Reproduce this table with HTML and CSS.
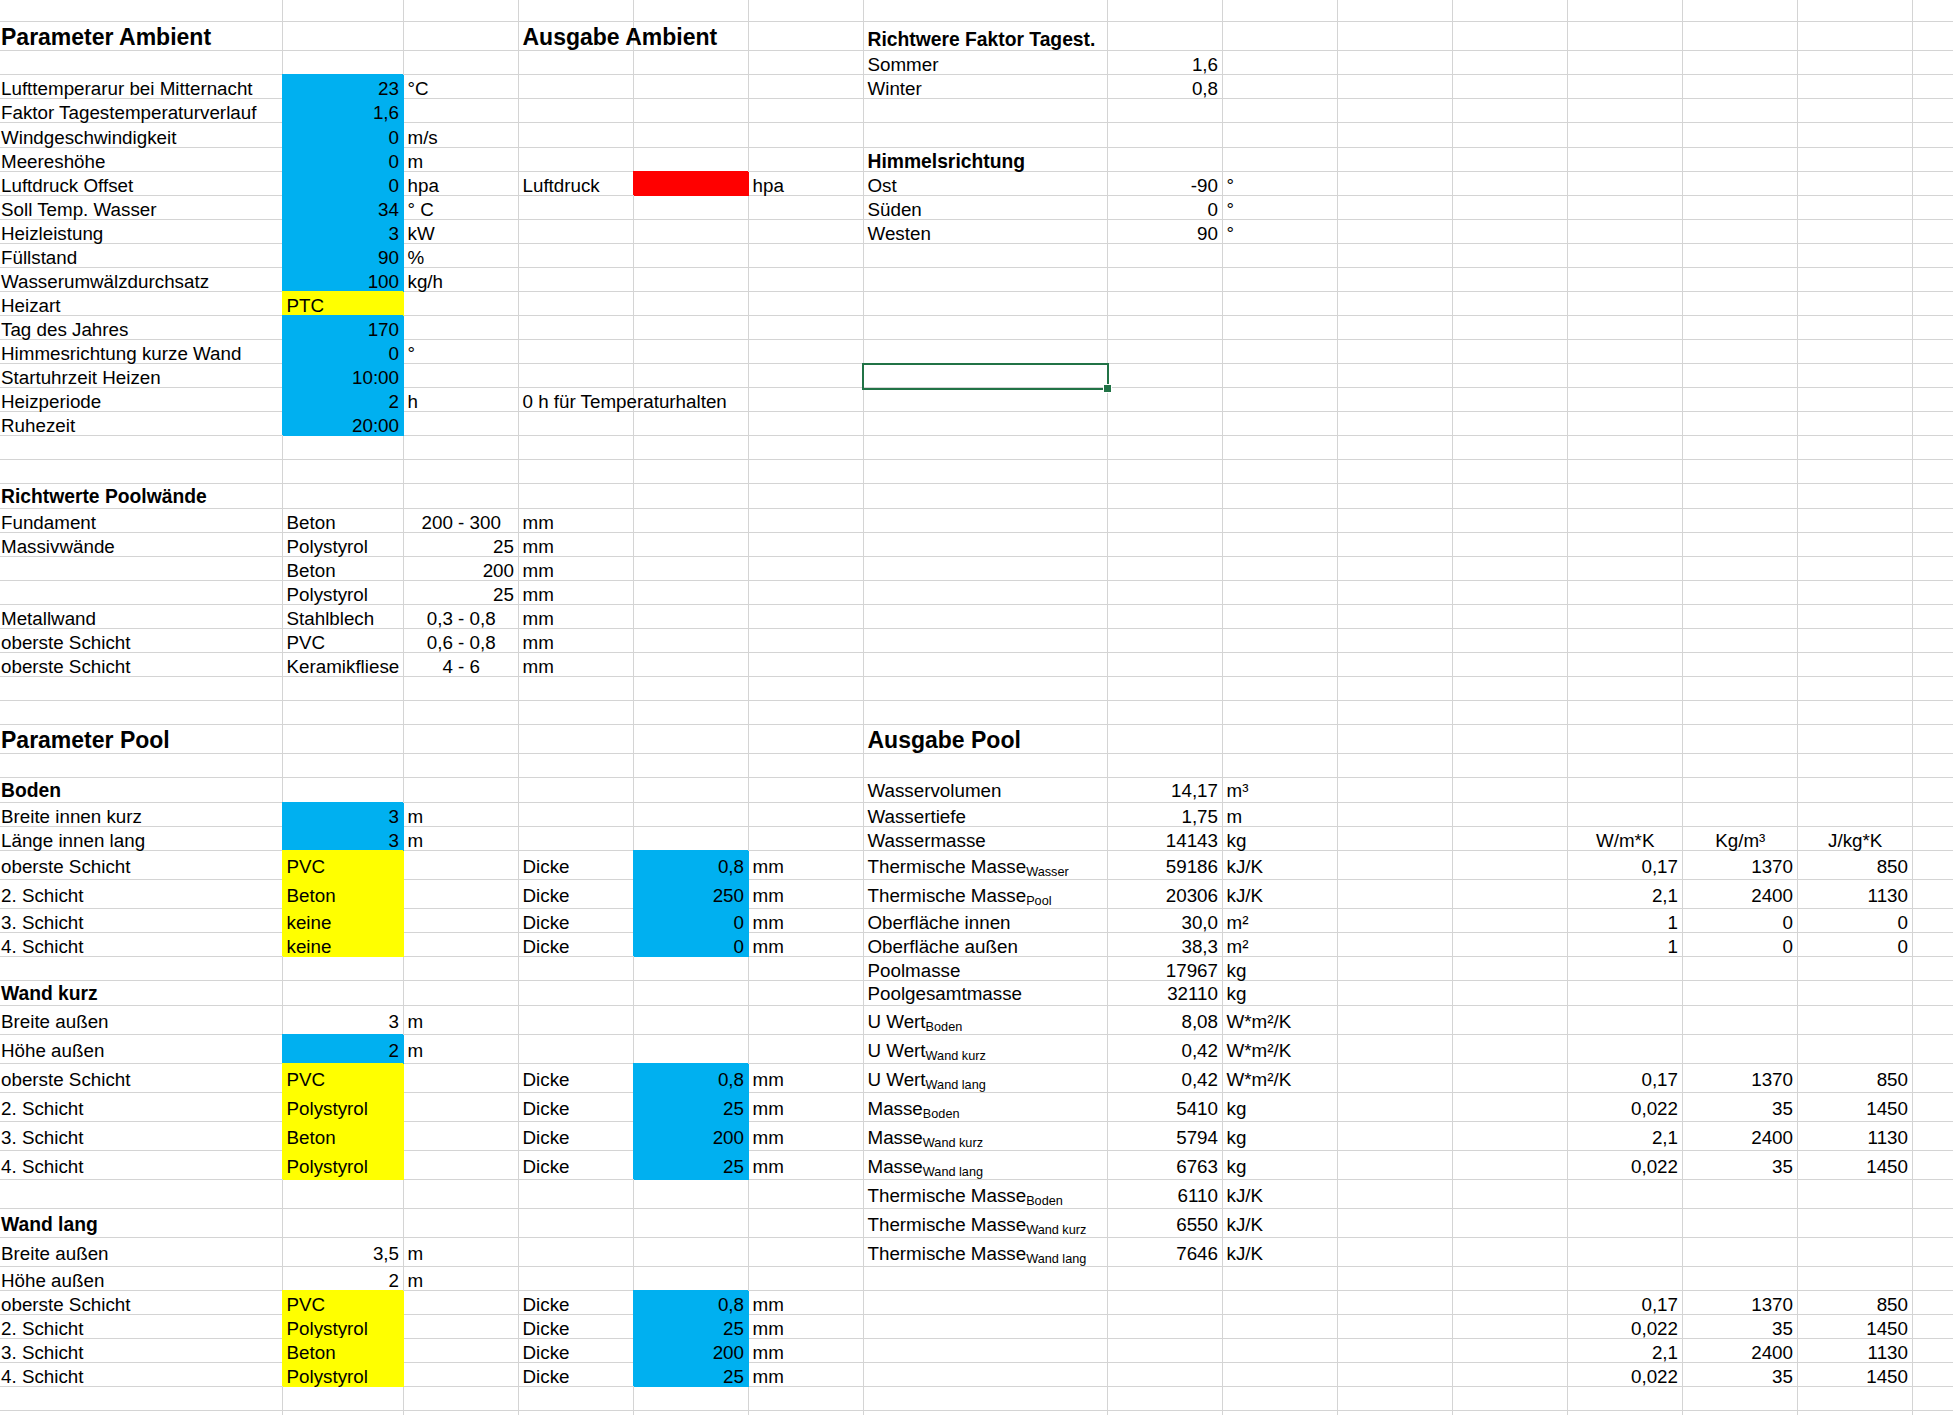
FILE: index.html
```html
<!DOCTYPE html>
<html lang="de">
<head>
<meta charset="utf-8">
<title>Pool Berechnung</title>
<link rel="stylesheet" href="styles.css">
</head>
<body>
<div class="sheet">
  <div class="row h22"></div>
  <div class="row h29 rh">
    <div class="c ca hdr">Parameter Ambient</div>
    <div class="c cd hdr">Ausgabe Ambient</div>
    <div class="c cg bold">Richtwere Faktor Tagest.</div>
  </div>
  <div class="row">
    <div class="c cg">Sommer</div><div class="c ch r">1,6</div>
  </div>
  <div class="row">
    <div class="c ca">Lufttemperarur bei Mitternacht</div><div class="c cb r blue">23</div><div class="c cc">°C</div>
    <div class="c cg">Winter</div><div class="c ch r">0,8</div>
  </div>
  <div class="row">
    <div class="c ca">Faktor Tagestemperaturverlauf</div><div class="c cb r blue">1,6</div>
  </div>
  <div class="row h25">
    <div class="c ca">Windgeschwindigkeit</div><div class="c cb r blue">0</div><div class="c cc">m/s</div>
  </div>
  <div class="row">
    <div class="c ca">Meereshöhe</div><div class="c cb r blue">0</div><div class="c cc">m</div>
    <div class="c cg bold">Himmelsrichtung</div>
  </div>
  <div class="row">
    <div class="c ca">Luftdruck Offset</div><div class="c cb r blue">0</div><div class="c cc">hpa</div>
    <div class="c cd">Luftdruck</div><div class="c ce red"></div><div class="c cf">hpa</div>
    <div class="c cg">Ost</div><div class="c ch r">-90</div><div class="c ci">°</div>
  </div>
  <div class="row">
    <div class="c ca">Soll Temp. Wasser</div><div class="c cb r blue">34</div><div class="c cc">° C</div>
    <div class="c cg">Süden</div><div class="c ch r">0</div><div class="c ci">°</div>
  </div>
  <div class="row">
    <div class="c ca">Heizleistung</div><div class="c cb r blue">3</div><div class="c cc">kW</div>
    <div class="c cg">Westen</div><div class="c ch r">90</div><div class="c ci">°</div>
  </div>
  <div class="row">
    <div class="c ca">Füllstand</div><div class="c cb r blue">90</div><div class="c cc">%</div>
  </div>
  <div class="row">
    <div class="c ca">Wasserumwälzdurchsatz</div><div class="c cb r blue">100</div><div class="c cc">kg/h</div>
  </div>
  <div class="row">
    <div class="c ca">Heizart</div><div class="c cb yel">PTC</div>
  </div>
  <div class="row">
    <div class="c ca">Tag des Jahres</div><div class="c cb r blue">170</div>
  </div>
  <div class="row">
    <div class="c ca">Himmesrichtung kurze Wand</div><div class="c cb r blue">0</div><div class="c cc">°</div>
  </div>
  <div class="row">
    <div class="c ca">Startuhrzeit Heizen</div><div class="c cb r blue">10:00</div>
    <div class="c cg sel"></div>
  </div>
  <div class="row">
    <div class="c ca">Heizperiode</div><div class="c cb r blue">2</div><div class="c cc">h</div>
    <div class="c cd">0 h für Temperaturhalten</div>
  </div>
  <div class="row">
    <div class="c ca">Ruhezeit</div><div class="c cb r blue">20:00</div>
  </div>
  <div class="row"></div>
  <div class="row"></div>
  <div class="row h25 rb">
    <div class="c ca bold">Richtwerte Poolwände</div>
  </div>
  <div class="row">
    <div class="c ca">Fundament</div><div class="c cb">Beton</div><div class="c cc ctr">200 - 300</div><div class="c cd">mm</div>
  </div>
  <div class="row">
    <div class="c ca">Massivwände</div><div class="c cb">Polystyrol</div><div class="c cc r">25</div><div class="c cd">mm</div>
  </div>
  <div class="row">
    <div class="c cb">Beton</div><div class="c cc r">200</div><div class="c cd">mm</div>
  </div>
  <div class="row">
    <div class="c cb">Polystyrol</div><div class="c cc r">25</div><div class="c cd">mm</div>
  </div>
  <div class="row">
    <div class="c ca">Metallwand</div><div class="c cb">Stahlblech</div><div class="c cc ctr">0,3 - 0,8</div><div class="c cd">mm</div>
  </div>
  <div class="row">
    <div class="c ca">oberste Schicht</div><div class="c cb">PVC</div><div class="c cc ctr">0,6 - 0,8</div><div class="c cd">mm</div>
  </div>
  <div class="row">
    <div class="c ca">oberste Schicht</div><div class="c cb">Keramikfliese</div><div class="c cc ctr">4 - 6</div><div class="c cd">mm</div>
  </div>
  <div class="row"></div>
  <div class="row"></div>
  <div class="row h29 rh">
    <div class="c ca hdr">Parameter Pool</div>
    <div class="c cg hdr">Ausgabe Pool</div>
  </div>
  <div class="row"></div>
  <div class="row h25 rb">
    <div class="c ca bold">Boden</div>
    <div class="c cg">Wasservolumen</div><div class="c ch r">14,17</div><div class="c ci">m³</div>
  </div>
  <div class="row">
    <div class="c ca">Breite innen kurz</div><div class="c cb r blue">3</div><div class="c cc">m</div>
    <div class="c cg">Wassertiefe</div><div class="c ch r">1,75</div><div class="c ci">m</div>
  </div>
  <div class="row">
    <div class="c ca">Länge innen lang</div><div class="c cb r blue">3</div><div class="c cc">m</div>
    <div class="c cg">Wassermasse</div><div class="c ch r">14143</div><div class="c ci">kg</div>
    <div class="c cl ctr">W/m*K</div><div class="c cm ctr">Kg/m³</div><div class="c cn ctr">J/kg*K</div>
  </div>
  <div class="row h29 sub">
    <div class="c ca">oberste Schicht</div><div class="c cb yel">PVC</div>
    <div class="c cd">Dicke</div><div class="c ce r blue">0,8</div><div class="c cf">mm</div>
    <div class="c cg"><span>Thermische Masse<sub>Wasser</sub></span></div><div class="c ch r">59186</div><div class="c ci">kJ/K</div>
    <div class="c cl r">0,17</div><div class="c cm r">1370</div><div class="c cn r">850</div>
  </div>
  <div class="row h29 sub">
    <div class="c ca">2. Schicht</div><div class="c cb yel">Beton</div>
    <div class="c cd">Dicke</div><div class="c ce r blue">250</div><div class="c cf">mm</div>
    <div class="c cg"><span>Thermische Masse<sub>Pool</sub></span></div><div class="c ch r">20306</div><div class="c ci">kJ/K</div>
    <div class="c cl r">2,1</div><div class="c cm r">2400</div><div class="c cn r">1130</div>
  </div>
  <div class="row">
    <div class="c ca">3. Schicht</div><div class="c cb yel">keine</div>
    <div class="c cd">Dicke</div><div class="c ce r blue">0</div><div class="c cf">mm</div>
    <div class="c cg">Oberfläche innen</div><div class="c ch r">30,0</div><div class="c ci">m²</div>
    <div class="c cl r">1</div><div class="c cm r">0</div><div class="c cn r">0</div>
  </div>
  <div class="row">
    <div class="c ca">4. Schicht</div><div class="c cb yel">keine</div>
    <div class="c cd">Dicke</div><div class="c ce r blue">0</div><div class="c cf">mm</div>
    <div class="c cg">Oberfläche außen</div><div class="c ch r">38,3</div><div class="c ci">m²</div>
    <div class="c cl r">1</div><div class="c cm r">0</div><div class="c cn r">0</div>
  </div>
  <div class="row">
    <div class="c cg">Poolmasse</div><div class="c ch r">17967</div><div class="c ci">kg</div>
  </div>
  <div class="row h25 rb">
    <div class="c ca bold">Wand kurz</div>
    <div class="c cg">Poolgesamtmasse</div><div class="c ch r">32110</div><div class="c ci">kg</div>
  </div>
  <div class="row h29 sub">
    <div class="c ca">Breite außen</div><div class="c cb r">3</div><div class="c cc">m</div>
    <div class="c cg"><span>U Wert<sub>Boden</sub></span></div><div class="c ch r">8,08</div><div class="c ci">W*m²/K</div>
  </div>
  <div class="row h29 sub">
    <div class="c ca">Höhe außen</div><div class="c cb r blue">2</div><div class="c cc">m</div>
    <div class="c cg"><span>U Wert<sub>Wand kurz</sub></span></div><div class="c ch r">0,42</div><div class="c ci">W*m²/K</div>
  </div>
  <div class="row h29 sub">
    <div class="c ca">oberste Schicht</div><div class="c cb yel">PVC</div>
    <div class="c cd">Dicke</div><div class="c ce r blue">0,8</div><div class="c cf">mm</div>
    <div class="c cg"><span>U Wert<sub>Wand lang</sub></span></div><div class="c ch r">0,42</div><div class="c ci">W*m²/K</div>
    <div class="c cl r">0,17</div><div class="c cm r">1370</div><div class="c cn r">850</div>
  </div>
  <div class="row h29 sub">
    <div class="c ca">2. Schicht</div><div class="c cb yel">Polystyrol</div>
    <div class="c cd">Dicke</div><div class="c ce r blue">25</div><div class="c cf">mm</div>
    <div class="c cg"><span>Masse<sub>Boden</sub></span></div><div class="c ch r">5410</div><div class="c ci">kg</div>
    <div class="c cl r">0,022</div><div class="c cm r">35</div><div class="c cn r">1450</div>
  </div>
  <div class="row h29 sub">
    <div class="c ca">3. Schicht</div><div class="c cb yel">Beton</div>
    <div class="c cd">Dicke</div><div class="c ce r blue">200</div><div class="c cf">mm</div>
    <div class="c cg"><span>Masse<sub>Wand kurz</sub></span></div><div class="c ch r">5794</div><div class="c ci">kg</div>
    <div class="c cl r">2,1</div><div class="c cm r">2400</div><div class="c cn r">1130</div>
  </div>
  <div class="row h29 sub">
    <div class="c ca">4. Schicht</div><div class="c cb yel">Polystyrol</div>
    <div class="c cd">Dicke</div><div class="c ce r blue">25</div><div class="c cf">mm</div>
    <div class="c cg"><span>Masse<sub>Wand lang</sub></span></div><div class="c ch r">6763</div><div class="c ci">kg</div>
    <div class="c cl r">0,022</div><div class="c cm r">35</div><div class="c cn r">1450</div>
  </div>
  <div class="row h29 sub">
    <div class="c cg"><span>Thermische Masse<sub>Boden</sub></span></div><div class="c ch r">6110</div><div class="c ci">kJ/K</div>
  </div>
  <div class="row h29 sub">
    <div class="c ca bold">Wand lang</div>
    <div class="c cg"><span>Thermische Masse<sub>Wand kurz</sub></span></div><div class="c ch r">6550</div><div class="c ci">kJ/K</div>
  </div>
  <div class="row h29 sub">
    <div class="c ca">Breite außen</div><div class="c cb r">3,5</div><div class="c cc">m</div>
    <div class="c cg"><span>Thermische Masse<sub>Wand lang</sub></span></div><div class="c ch r">7646</div><div class="c ci">kJ/K</div>
  </div>
  <div class="row">
    <div class="c ca">Höhe außen</div><div class="c cb r">2</div><div class="c cc">m</div>
  </div>
  <div class="row">
    <div class="c ca">oberste Schicht</div><div class="c cb yel">PVC</div>
    <div class="c cd">Dicke</div><div class="c ce r blue">0,8</div><div class="c cf">mm</div>
    <div class="c cl r">0,17</div><div class="c cm r">1370</div><div class="c cn r">850</div>
  </div>
  <div class="row">
    <div class="c ca">2. Schicht</div><div class="c cb yel">Polystyrol</div>
    <div class="c cd">Dicke</div><div class="c ce r blue">25</div><div class="c cf">mm</div>
    <div class="c cl r">0,022</div><div class="c cm r">35</div><div class="c cn r">1450</div>
  </div>
  <div class="row">
    <div class="c ca">3. Schicht</div><div class="c cb yel">Beton</div>
    <div class="c cd">Dicke</div><div class="c ce r blue">200</div><div class="c cf">mm</div>
    <div class="c cl r">2,1</div><div class="c cm r">2400</div><div class="c cn r">1130</div>
  </div>
  <div class="row">
    <div class="c ca">4. Schicht</div><div class="c cb yel">Polystyrol</div>
    <div class="c cd">Dicke</div><div class="c ce r blue">25</div><div class="c cf">mm</div>
    <div class="c cl r">0,022</div><div class="c cm r">35</div><div class="c cn r">1450</div>
  </div>
  <div class="row"></div>
  <div class="row"></div>
</div>
</body>
</html>
```
FILE: styles.css
```css
* { box-sizing: border-box; }

html, body {
  margin: 0;
  padding: 0;
  background: #ffffff;
  overflow: hidden;
}

body {
  font-family: "Liberation Sans", Arial, sans-serif;
  font-size: 18.8px;
  color: #000000;
}

.sheet {
  --grid: #d4d4d4;
  --gl: linear-gradient(var(--grid), var(--grid));
  width: 1953px;
  height: 1415px;
  overflow: hidden;
  background-image: var(--gl), var(--gl), var(--gl), var(--gl), var(--gl), var(--gl), var(--gl),
                    var(--gl), var(--gl), var(--gl), var(--gl), var(--gl), var(--gl), var(--gl);
  background-size: 1px 100%;
  background-repeat: no-repeat;
  background-position: 282px 0, 403px 0, 518px 0, 633px 0, 748px 0, 863px 0, 1107px 0,
                       1222px 0, 1337px 0, 1452px 0, 1567px 0, 1682px 0, 1797px 0, 1912px 0;
}

.row {
  display: grid;
  grid-template-columns: 283px 121px 115px 115px 115px 115px 244px 115px 115px 115px 115px 115px 115px 115px 115px;
  height: 24px;
  background: linear-gradient(#d4d4d4, #d4d4d4) 0 100% / 100% 1px no-repeat;
}

.h22 { height: 22px; }
.h25 { height: 25px; }
.h29 { height: 29px; }

.c {
  display: flex;
  align-items: flex-end;
  min-width: 0;
  padding: 0 4px 0.5px 3.5px;
  line-height: 20px;
  white-space: nowrap;
}

.rh .c { padding-bottom: 0.6px; }
.rb .c { padding-bottom: 2.2px; }
.sub .c { padding-bottom: 3.2px; }

.ca { grid-column: 1; padding-left: 1px; }
.cb { grid-column: 2; }
.cc { grid-column: 3; }
.cd { grid-column: 4; }
.ce { grid-column: 5; }
.cf { grid-column: 6; }
.cg { grid-column: 7; }
.ch { grid-column: 8; }
.ci { grid-column: 9; }
.cl { grid-column: 12; }
.cm { grid-column: 13; }
.cn { grid-column: 14; }

.r { justify-content: flex-end; padding-right: 5px; }
.ctr { justify-content: center; }

.hdr {
  font-size: 23px;
  font-weight: bold;
  line-height: 26px;
}

.bold {
  font-size: 19.3px;
  font-weight: bold;
}

.c sub {
  font-size: 12.7px;
  vertical-align: -3px;
  line-height: 0;
}

.blue { background: #00b0f0; box-shadow: -1px -1px 0 #00b0f0; }
.yel { background: #ffff00; box-shadow: -1px -1px 0 #ffff00; }
.red { background: #ff0000; box-shadow: -1px -1px 0 #ff0000; }

.sel { position: relative; }
.sel::after {
  content: "";
  position: absolute;
  left: -2px;
  top: -1px;
  right: -1px;
  bottom: -2px;
  border: 2px solid #217346;
}
.sel::before {
  content: "";
  position: absolute;
  right: -4px;
  bottom: -5px;
  width: 7px;
  height: 7px;
  background: #217346;
  border: 1px solid #ffffff;
  z-index: 1;
}
```
